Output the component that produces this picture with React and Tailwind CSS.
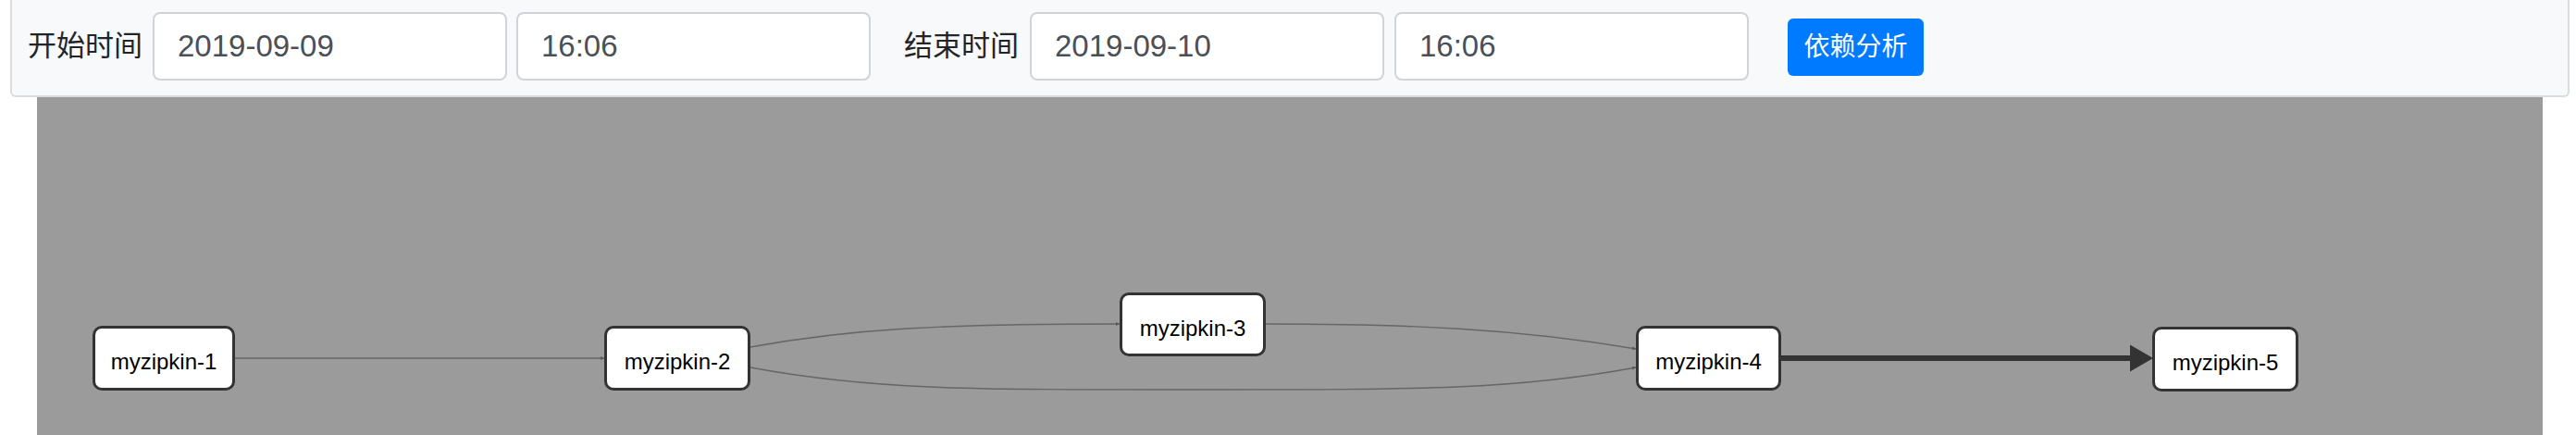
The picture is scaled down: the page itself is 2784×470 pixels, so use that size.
import React from 'react';

const nodes = [
    { id: 'myzipkin-1', left: 60, top: 247, width: 154, height: 70 },
    { id: 'myzipkin-2', left: 613, top: 247, width: 158, height: 70 },
    { id: 'myzipkin-3', left: 1170, top: 211, width: 158, height: 69 },
    { id: 'myzipkin-4', left: 1728, top: 247, width: 157, height: 70 },
    { id: 'myzipkin-5', left: 2286, top: 248, width: 158, height: 70 },
];

function TimeInput({ value, className }) {
    return (
        <input
            type="text"
            readOnly
            value={value}
            className={`w-[383px] h-[74px] px-[25px] bg-white border-2 border-[#ced4da] rounded-[8px] text-[33px] text-[#495057] outline-none font-['Liberation_Sans',sans-serif] ${className}`}
        />
    );
}

export default function App() {
    return (
        <div className="w-[2784px] h-[470px] overflow-hidden bg-white font-['Liberation_Sans','Noto_Sans_CJK_SC',sans-serif]">
            {/* toolbar */}
            <div className="ml-[11px] mr-[7px] h-[105px] bg-[#f8f9fa] border-2 border-t-0 border-[#dadde0] rounded-b-[6px] flex items-start pt-[13px] pl-[17px]">
                <span className="h-[74px] flex items-center text-[31px] text-[#212529] mr-[11px]">开始时间</span>
                <TimeInput value="2019-09-09" className="mr-[10px]" />
                <TimeInput value="16:06" />
                <span className="h-[74px] flex items-center text-[31px] text-[#212529] ml-[36px] mr-[12px]">结束时间</span>
                <TimeInput value="2019-09-10" className="mr-[11px]" />
                <TimeInput value="16:06" />
                <button className="ml-[42px] mt-[7px] w-[147px] h-[62px] bg-[#007bff] text-white text-[28px] rounded-[6px] flex items-center justify-center">
                    依赖分析
                </button>
            </div>

            {/* dependency graph */}
            <div className="relative ml-[40px] w-[2708px] h-[365px] bg-[#9b9b9b]">
                <svg width="2708" height="365" className="absolute inset-0">
                    <defs>
                        <marker id="tip" markerWidth="4" markerHeight="4" refX="4" refY="2" orient="auto" markerUnits="userSpaceOnUse">
                            <path d="M0,0 L4,2 L0,4 z" fill="#5a5a5a" />
                        </marker>
                    </defs>
                    <g fill="none" stroke="#666" strokeWidth="1.4">
                        <path d="M214,282 L613,282" markerEnd="url(#tip)" />
                        <path d="M771,270 C880,250 980,245 1170,245" markerEnd="url(#tip)" />
                        <path d="M1328,245 C1480,245 1600,250 1728,272" markerEnd="url(#tip)" />
                        <path d="M771,292 C900,316 1000,316 1249,316 C1500,316 1600,316 1728,292" markerEnd="url(#tip)" />
                    </g>
                    <path d="M1885,282 L2264,282" stroke="#333" strokeWidth="6" fill="none" />
                    <polygon points="2262,267.5 2287,282 2262,296.5" fill="#333" />
                </svg>

                {nodes.map(n => (
                    <div
                        key={n.id}
                        className="absolute bg-white border-[3px] border-[#333] rounded-[10px] flex items-center justify-center pt-[8px] text-[24px] text-black"
                        style={{ left: n.left, top: n.top, width: n.width, height: n.height }}
                    >
                        {n.id}
                    </div>
                ))}
            </div>
        </div>
    );
}
